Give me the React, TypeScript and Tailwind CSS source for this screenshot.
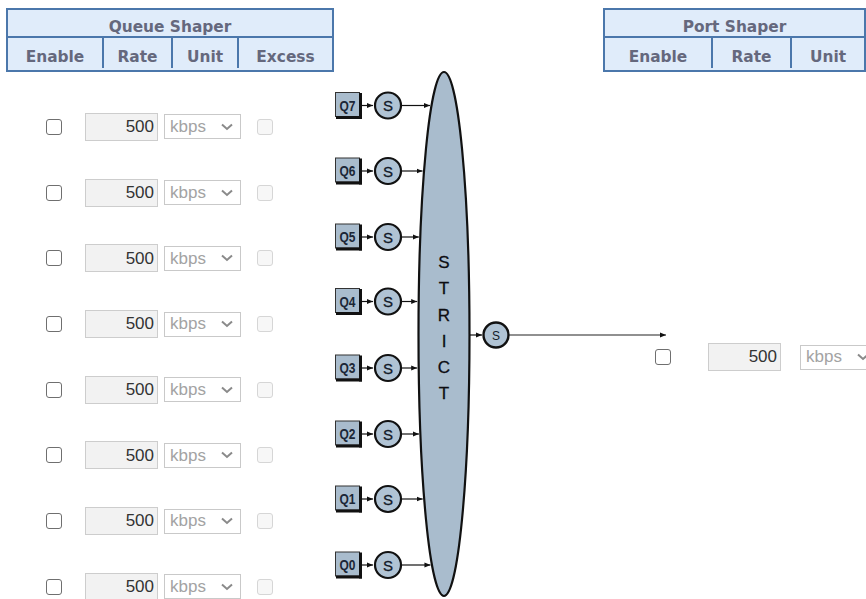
import React from "react";

const HEAD_FONT = { fontFamily: '"DejaVu Sans", Verdana, sans-serif' };
const BODY_FONT = { fontFamily: '"Liberation Sans", Arial, sans-serif' };

function Checkbox({ disabled = false }: { disabled?: boolean }) {
  return (
    <div
      className={
        disabled
          ? "w-4 h-4 shrink-0 rounded-[3px] border border-[#d6d6d6] bg-[#f7f7f7]"
          : "w-4 h-4 shrink-0 rounded-[3px] border-[1.5px] border-[#6f6f6f] bg-white"
      }
    />
  );
}

function RateInput() {
  return (
    <div
      className="w-[73px] h-[28px] shrink-0 border border-[#cdcdcd] bg-[#f2f2f2] flex items-center justify-end pr-[3px] text-[17px] text-[#333]"
      style={BODY_FONT}
    >
      500
    </div>
  );
}

function UnitSelect() {
  return (
    <div
      className="w-[77px] h-[25px] shrink-0 border border-[#c9c9c9] bg-white flex items-center justify-between pl-[5px] pr-[7px] text-[17px] text-[#a3a3a3]"
      style={BODY_FONT}
    >
      <span>kbps</span>
      <svg width="12" height="8" viewBox="0 0 12 8">
        <path d="M1 1.5 L6 6 L11 1.5" fill="none" stroke="#8a8a8a" strokeWidth="2" />
      </svg>
    </div>
  );
}

const Q_ROWS = [
  { label: "Q7", y: 105.5 },
  { label: "Q6", y: 171 },
  { label: "Q5", y: 237 },
  { label: "Q4", y: 301.5 },
  { label: "Q3", y: 368 },
  { label: "Q2", y: 434 },
  { label: "Q1", y: 499 },
  { label: "Q0", y: 565 },
];

const CX = 444;
const CY = 334;
const RX = 25.5;
const RY = 262;
const edge = (y: number) =>
  CX - RX * Math.sqrt(Math.max(0, 1 - ((y - CY) / RY) ** 2)) - 1.5;

function Diagram() {
  return (
    <svg
      width="270"
      height="527"
      viewBox="333 72 270 527"
      className="shrink-0 overflow-visible"
      style={{ overflow: "visible" }}
    >
      <defs>
        <marker
          id="ah"
          markerUnits="userSpaceOnUse"
          markerWidth="6"
          markerHeight="6"
          refX="6"
          refY="3"
          orient="auto"
        >
          <path d="M0,0.5 L6,3 L0,5.5 z" fill="#111" />
        </marker>
      </defs>
      <ellipse cx={CX} cy={CY} rx={RX} ry={RY} fill="#a9bccd" stroke="#111" strokeWidth="2.2" />
      {["S", "T", "R", "I", "C", "T"].map((ch, i) => (
        <text
          key={i}
          x={CX}
          y={[262, 288, 314.5, 341, 367, 393][i] + 6}
          textAnchor="middle"
          fontSize="17"
          fill="#0d0d12"
          stroke="#0d0d12"
          strokeWidth="0.3"
          style={BODY_FONT}
        >
          {ch}
        </text>
      ))}
      {Q_ROWS.map((r) => {
        const t = r.y - 13.5;
        return (
          <g key={r.label}>
            <rect x={335.5} y={t + 0.5} width={24} height={24} fill="#a9bccd" stroke="#333" strokeWidth="1" />
            <rect x={359} y={t + 1} width={3} height={26} fill="#111" />
            <rect x={336} y={t + 24} width={26} height={3} fill="#111" />
            <text
              x={339.5}
              y={r.y + 5}
              fontSize="14"
              fontWeight="bold"
              fill="#1b2636"
              textLength={16}
              lengthAdjust="spacingAndGlyphs"
              style={BODY_FONT}
            >
              {r.label}
            </text>
            <line x1={362} y1={r.y} x2={373} y2={r.y} stroke="#111" strokeWidth="1.2" markerEnd="url(#ah)" />
            <circle cx={388} cy={r.y} r={13} fill="#b0c3d4" stroke="#111" strokeWidth="2.2" />
            <text
              x={388}
              y={r.y + 5.5}
              textAnchor="middle"
              fontSize="15"
              fill="#121a28"
              stroke="#121a28"
              strokeWidth="0.3"
              style={BODY_FONT}
            >
              S
            </text>
            <line x1={401} y1={r.y} x2={edge(r.y)} y2={r.y} stroke="#111" strokeWidth="1.2" markerEnd="url(#ah)" />
          </g>
        );
      })}
      <line x1={470} y1={335} x2={482} y2={335} stroke="#111" strokeWidth="1.2" markerEnd="url(#ah)" />
      <circle cx={496} cy={335} r={12.5} fill="#b0c3d4" stroke="#111" strokeWidth="2.4" />
      <text x={496} y={339.5} textAnchor="middle" fontSize="12" fill="#121a28" style={BODY_FONT}>
        S
      </text>
      <line x1={509} y1={335} x2={666} y2={335} stroke="#222" strokeWidth="1.2" markerEnd="url(#ah)" />
    </svg>
  );
}

function HeadCell({ children, w, first = false }: { children: React.ReactNode; w: string; first?: boolean }) {
  return (
    <div className={`${w} ${first ? "" : "border-l-2 border-[#4b77ab]"} flex items-center justify-center shrink-0 pt-[9px]`}>
      {children}
    </div>
  );
}

export default function App() {
  return (
    <div className="w-[866px] h-[599px] overflow-hidden bg-white relative">
      <div className="flex pt-[8px] text-[15.4px] font-bold text-[#65687d]" style={HEAD_FONT}>
        <div className="ml-[6px] w-[328px] h-[64px] shrink-0 border-2 border-[#4b77ab] bg-[#e0ecfa] flex flex-col">
          <div className="h-[28px] flex items-center justify-center border-b-2 border-[#4b77ab] pt-[9px]">Queue Shaper</div>
          <div className="h-[30px] flex">
            <HeadCell w="w-[94px]" first>Enable</HeadCell>
            <HeadCell w="w-[69px]">Rate</HeadCell>
            <HeadCell w="w-[66px]">Unit</HeadCell>
            <HeadCell w="w-[95px]">Excess</HeadCell>
          </div>
        </div>
        <div className="ml-[269px] w-[263px] h-[64px] shrink-0 border-2 border-[#4b77ab] bg-[#e0ecfa] flex flex-col">
          <div className="h-[28px] flex items-center justify-center border-b-2 border-[#4b77ab] pt-[9px]">Port Shaper</div>
          <div className="h-[30px] flex">
            <HeadCell w="w-[106px]" first>Enable</HeadCell>
            <HeadCell w="w-[79px]">Rate</HeadCell>
            <HeadCell w="w-[74px]">Unit</HeadCell>
          </div>
        </div>
      </div>
      <div className="flex">
        <div className="w-[333px] shrink-0 pt-[22.15px] flex flex-col">
          {Q_ROWS.map((r) => (
            <div key={r.label} className="h-[65.7px] shrink-0 flex items-center">
              <div className="ml-[46px] flex items-center">
                <Checkbox />
              </div>
              <div className="ml-[23px]">
                <RateInput />
              </div>
              <div className="ml-[6px]">
                <UnitSelect />
              </div>
              <div className="ml-[16px]">
                <Checkbox disabled />
              </div>
            </div>
          ))}
        </div>
        <Diagram />
        <div className="w-[263px] shrink-0 pt-[271px]">
          <div className="h-[28px] flex items-center">
            <div className="ml-[52px]">
              <Checkbox />
            </div>
            <div className="ml-[37px]">
              <RateInput />
            </div>
            <div className="ml-[19px]">
              <UnitSelect />
            </div>
          </div>
        </div>
      </div>
    </div>
  );
}
